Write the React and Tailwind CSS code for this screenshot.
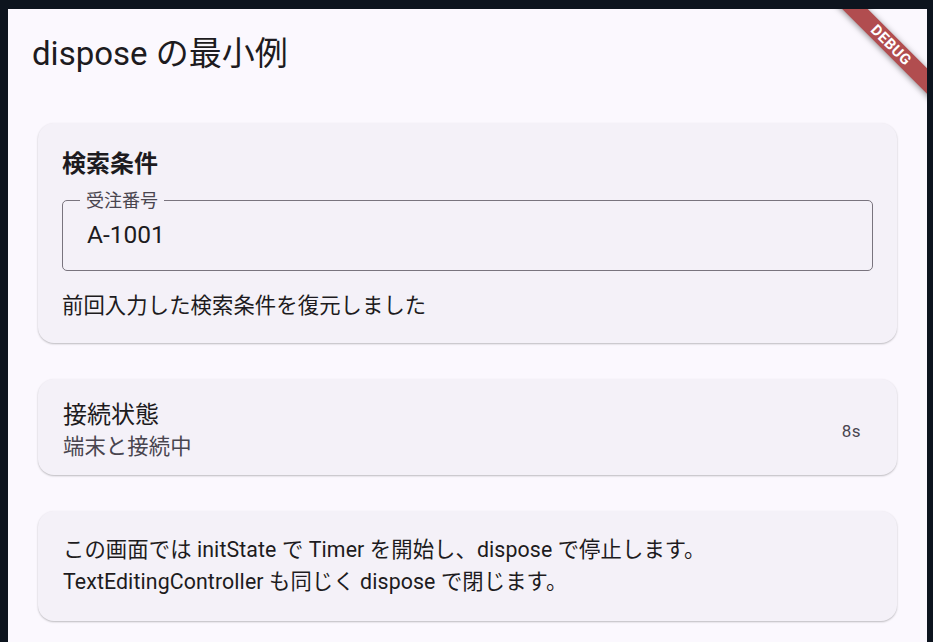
import React from 'react';

// dispose の最小例 - Flutter風のデモ画面
export default function App() {
  return (
    <div className="w-[933px] h-[642px] bg-[#0d141e] pt-[9px] pl-[8px] pr-[6px] overflow-hidden">
      <div className="relative h-full bg-[#fbf8fe] overflow-hidden text-[#1d1b20] font-[Roboto,'Noto_Sans_CJK_JP',sans-serif]">
        {/* AppBar */}
        <div className="h-[86px] flex items-center pl-[24px] pt-[3px]">
          <h1 className="text-[33px] leading-[40px] font-normal">dispose の最小例</h1>
        </div>

        <div className="px-[30px] pt-[28px] flex flex-col gap-[36px]">
          {/* 検索条件 */}
          <div className="bg-[#f4f1f8] rounded-[16px] shadow-[0_1px_2px_rgba(0,0,0,0.25)] pt-[24px] pb-[21px] px-[24px]">
            <div className="text-[24px] leading-[35px] font-bold">検索条件</div>
            <div className="relative mt-[18px] h-[71px] border border-[#79747e] rounded-[5px] flex items-center pl-[24px] pb-[2px]">
              <span className="absolute left-[17px] top-[-9px] px-[6px] bg-[#f4f1f8] text-[18px] leading-[18px] text-[#49454f]">
                受注番号
              </span>
              <span className="text-[24.5px] leading-[32px]">A-1001</span>
            </div>
            <div className="mt-[19px] text-[21.33px] leading-[32px] tracking-[0.1px]">前回入力した検索条件を復元しました</div>
          </div>

          {/* 接続状態 */}
          <div className="bg-[#f4f1f8] rounded-[16px] shadow-[0_1px_2px_rgba(0,0,0,0.25)] pt-[20px] pb-[12px] pl-[25px] pr-[36px] flex items-center justify-between">
            <div>
              <div className="text-[24px] leading-[32px]">接続状態</div>
              <div className="text-[21.33px] leading-[32px] text-[#49454f] tracking-[0.1px]">端末と接続中</div>
            </div>
            <div className="text-[17px] leading-[24px] text-[#49454f] tracking-[0.5px]">8s</div>
          </div>

          {/* 説明 */}
          <div className="bg-[#f4f1f8] rounded-[16px] shadow-[0_1px_2px_rgba(0,0,0,0.25)] py-[23px] px-[25px] text-[21.33px] leading-[32px] tracking-[0.1px]">
            この画面では initState で Timer を開始し、dispose で停止します。
            <br />
            TextEditingController も同じく dispose で閉じます。
          </div>
        </div>

        {/* DEBUG バナー */}
        <div className="absolute top-0 right-0 w-[120px] h-[120px] overflow-hidden pointer-events-none">
          <div className="absolute left-[-16px] top-[27px] w-[200px] h-[18px] rotate-45 bg-[#b14d4f] shadow-[0_1px_6px_rgba(0,0,0,0.45)] flex items-center justify-center">
            <span className="text-white text-[15px] leading-[18px] font-bold tracking-[0.5px]">DEBUG</span>
          </div>
        </div>
      </div>
    </div>
  );
}
